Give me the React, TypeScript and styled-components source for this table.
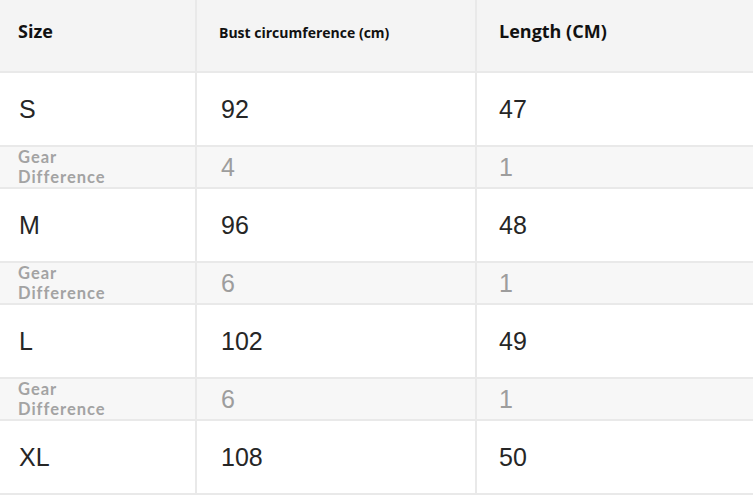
import React from "react";
import styled, { createGlobalStyle } from "styled-components";

const Global = createGlobalStyle`
  html, body { margin: 0; padding: 0; background: #ffffff; }
  body { width: 753px; height: 497px; overflow: hidden; }
`;

const Table = styled.div`
  display: flex;
  flex-direction: column;
  width: 753px;
  background: #ffffff;
`;

const Row = styled.div<{ $kind: "head" | "body" | "gear" }>`
  display: grid;
  grid-template-columns: 197px 280px 1fr;
  height: ${(p) => (p.$kind === "head" ? 71 : p.$kind === "body" ? 72 : 40)}px;
  border-bottom: 2px solid #e9e9e9;
  background: ${(p) =>
    p.$kind === "head" ? "#f4f4f4" : p.$kind === "gear" ? "#f7f7f7" : "#ffffff"};
`;

const Cell = styled.div<{ $last?: boolean; $pad?: number }>`
  display: flex;
  align-items: center;
  padding-left: ${(p) => p.$pad ?? 24}px;
  border-right: ${(p) => (p.$last ? "none" : "2px solid #e9e9e9")};
  box-sizing: border-box;
`;

const HeadText = styled.span<{ $small?: boolean }>`
  font-family: "Open Sans", "Noto Sans", sans-serif;
  font-weight: 700;
  font-size: ${(p) => (p.$small ? 14 : 18)}px;
  color: #111111;
  margin-bottom: ${(p) => (p.$small ? 6 : 9)}px;
`;

const Value = styled.span<{ $muted?: boolean }>`
  font-family: "Liberation Sans", Arial, sans-serif;
  font-size: 25px;
  color: ${(p) => (p.$muted ? "#9d9d9d" : "#262626")};
`;

const GearLabel = styled.div`
  display: flex;
  flex-direction: column;
  font-family: Lato, "Open Sans", sans-serif;
  font-weight: 700;
  font-size: 16.5px;
  line-height: 20px;
  letter-spacing: 1px;
  color: #a3a3a3;
`;

type Size = { size: string; bust: string; length: string };
const sizes: Size[] = [
  { size: "S", bust: "92", length: "47" },
  { size: "M", bust: "96", length: "48" },
  { size: "L", bust: "102", length: "49" },
  { size: "XL", bust: "108", length: "50" },
];
const gears = [
  { bust: "4", length: "1" },
  { bust: "6", length: "1" },
  { bust: "6", length: "1" },
];

export default function App() {
  return (
    <>
      <Global />
      <Table>
        <Row $kind="head">
          <Cell $pad={18}>
            <HeadText>Size</HeadText>
          </Cell>
          <Cell $pad={22}>
            <HeadText $small>Bust circumference (cm)</HeadText>
          </Cell>
          <Cell $last $pad={22}>
            <HeadText>Length (CM)</HeadText>
          </Cell>
        </Row>
        {sizes.map((s, i) => (
          <React.Fragment key={s.size}>
            <Row $kind="body">
              <Cell $pad={19}>
                <Value>{s.size}</Value>
              </Cell>
              <Cell>
                <Value>{s.bust}</Value>
              </Cell>
              <Cell $last $pad={22}>
                <Value>{s.length}</Value>
              </Cell>
            </Row>
            {gears[i] && (
              <Row $kind="gear">
                <Cell $pad={18}>
                  <GearLabel>
                    <span>Gear</span>
                    <span>Difference</span>
                  </GearLabel>
                </Cell>
                <Cell>
                  <Value $muted>{gears[i].bust}</Value>
                </Cell>
                <Cell $last $pad={22}>
                  <Value $muted>{gears[i].length}</Value>
                </Cell>
              </Row>
            )}
          </React.Fragment>
        ))}
      </Table>
    </>
  );
}
